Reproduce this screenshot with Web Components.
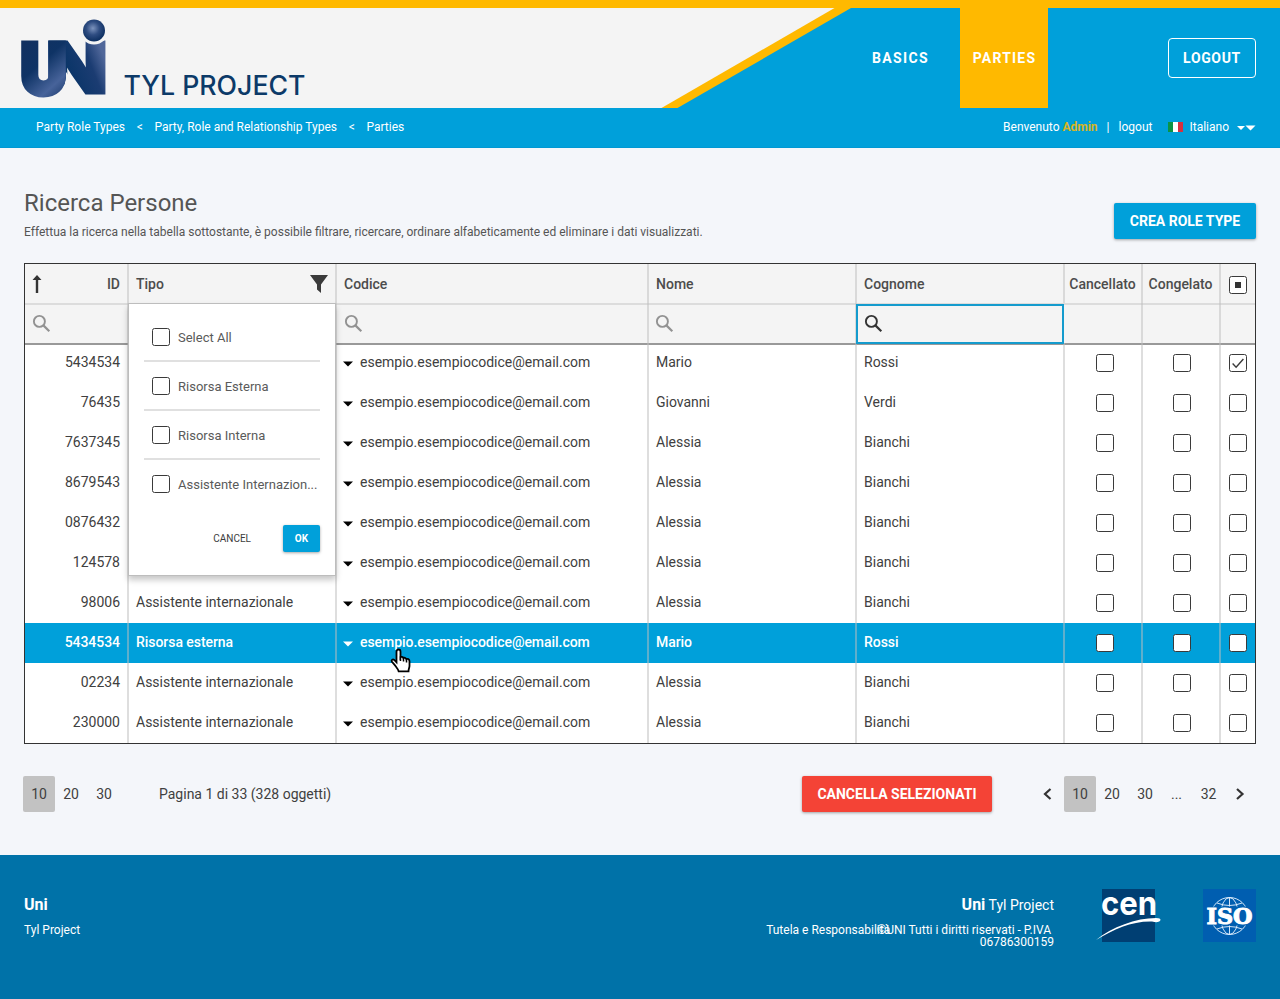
<!DOCTYPE html>
<html lang="it">
<head>
<meta charset="utf-8">
<title>Uni Tyl Project</title>
<style>
html,body{margin:0;padding:0}
body{background:#f4f6fa;font-family:Roboto,"Liberation Sans",sans-serif;font-size:14px;color:#404040;width:1280px;height:999px;overflow:hidden}
</style>
</head>
<body>
<uni-app></uni-app>
<script>
function define(name, css, html, setup) {
  const tpl = document.createElement('template');
  tpl.innerHTML = '<style>*{box-sizing:border-box}:host{display:block;box-sizing:border-box}' + css + '</style>' + html;
  customElements.define(name, class extends HTMLElement {
    constructor() {
      super();
      this.attachShadow({ mode: 'open' });
    }
    connectedCallback() {
      if (this.shadowRoot.childNodes.length) return;
      this.shadowRoot.append(tpl.content.cloneNode(true));
      if (setup) setup(this, this.shadowRoot);
    }
  });
}

define('uni-checkbox', `
  :host{width:18px;height:18px;flex:none;border:1.5px solid #3a3a3a;border-radius:2.5px;background:#fff;display:flex;align-items:center;justify-content:center}
  svg{display:none;flex:none}
  i{display:none;width:6px;height:6px;background:#333}
  :host([checked]) svg{display:block}
  :host([mixed]) i{display:block}`,
  `<i></i><svg width="14" height="14" viewBox="0 0 14 14"><path d="M1.6 7.6l3.5 3.6L12.4 3" fill="none" stroke="#3a3a3a" stroke-width="1.4"/></svg>`);

define('uni-button', `
  :host{display:flex;align-items:center;justify-content:center;height:36px;border-radius:2px;background:#00a0da;color:#fff;font-weight:700;font-size:14px;box-shadow:0 1px 3px rgba(0,0,0,.35);white-space:nowrap}
  :host([danger]){background:#f44336}
  :host([small]){width:37px;height:27px;font-size:10px}`,
  `<slot></slot>`);

define('uni-search', `
  :host{width:20px;height:20px;color:#929292}
  :host([active]){color:#333}
  svg{display:block}`,
  `<svg width="20" height="20" viewBox="0 0 20 20" fill="none" stroke="currentColor"><circle cx="7.4" cy="7.4" r="5.5" stroke-width="1.9"/><path d="M11.4 11.400l5.900 5.900" stroke-width="2.200"/></svg>`);

define('uni-logo', `
  :host{width:320px;height:100px}
  svg{display:block}
  text{font-family:Inter,Roboto,sans-serif;font-weight:900}
  .name{font-weight:500}`,
  `<svg width="320" height="100" viewBox="0 8 320 100">
    <defs>
      <linearGradient id="a" gradientUnits="userSpaceOnUse" x1="20" y1="40" x2="72" y2="98">
        <stop offset="0" stop-color="#12305f"/><stop offset=".4" stop-color="#0e3365"/><stop offset=".72" stop-color="#47639a"/><stop offset="1" stop-color="#0f2f60"/>
      </linearGradient>
      <linearGradient id="b" gradientUnits="userSpaceOnUse" x1="50" y1="84" x2="106" y2="62">
        <stop offset="0" stop-color="#4d679b"/><stop offset=".35" stop-color="#0a3568"/><stop offset=".75" stop-color="#1b3c72"/><stop offset="1" stop-color="#50679a"/>
      </linearGradient>
      <radialGradient id="c" cx=".45" cy=".4" r=".6">
        <stop offset="0" stop-color="#7c93bd"/><stop offset=".5" stop-color="#2f4d82"/><stop offset="1" stop-color="#0c2e60"/>
      </radialGradient>
      <clipPath id="k"><path d="M48 38H106V96H84L66 72Q67 86 58 91L48 78Z"/></clipPath>
    </defs>
    <g clip-path="url(#k)"><text x="45.500" y="92.500" font-size="70" textLength="62" lengthAdjust="spacingAndGlyphs" fill="url(#b)" stroke="url(#b)" stroke-width="3">N</text></g>
    <text x="20.500" y="94.300" font-size="70.500" textLength="46" lengthAdjust="spacingAndGlyphs" fill="url(#a)" stroke="url(#a)" stroke-width="5">U</text>
    <circle cx="94" cy="30" r="14.500" fill="#f4f4f4"/>
    <circle cx="94" cy="30.500" r="11" fill="url(#c)"/>
    <text class="name" x="123.500" y="95" font-size="27" textLength="182" lengthAdjust="spacingAndGlyphs" fill="#0c3a68">TYL PROJECT</text>
  </svg>`);

define('uni-header', `
  .top{height:108px;border-top:8px solid #ffb900;display:flex;justify-content:space-between;background:#00a0da;position:relative}
  .wedge{position:absolute;left:0;top:0}
  uni-logo{position:relative}
  nav{position:relative;display:flex;align-items:center;margin-right:24px;color:#fff;font-weight:700;letter-spacing:1.35px;line-height:100px}
  nav span{width:88px;text-align:center;padding-left:1px}
  nav .on{background:#ffb900;letter-spacing:1.2px}
  nav a{margin:0 0 0 120px;width:88px;height:40px;line-height:38px;text-align:center;border:1px solid #fff;border-radius:4px;letter-spacing:.65px}
  nav .first{margin-right:16px}
  .bar{height:40px;background:#00a0da;border-bottom:1px solid #0098d3;display:flex;align-items:center;justify-content:space-between;padding:0 24px 2px 36px;font-size:12px;color:#fff}
  .bar div{display:flex;align-items:center;white-space:pre}
  b{color:#ffb900;opacity:.85}
  .g{margin:0 11.7px}`,
  `<div class="top">
    <svg class="wedge" width="860" height="100"><path d="M0 0H851L677.5 100H0Z" fill="#ffb900"/><path d="M0 0H834.5L661.5 100H0Z" fill="#f4f4f4"/></svg>
    <uni-logo></uni-logo>
    <nav><span class="first">BASICS</span><span class="on">PARTIES</span><a>LOGOUT</a></nav>
  </div>
  <div class="bar">
    <div><span>Party Role Types</span><span class="g">&lt;</span><span>Party, Role and Relationship Types</span><span class="g">&lt;</span><span>Parties</span></div>
    <div><span>Benvenuto <b>Admin</b></span><span style="margin:0 9px">|</span><span>logout</span>
      <svg width="15" height="10" style="margin:1px 6px 0 16px"><path d="M0 0h5v10H0z" fill="#0b9444"/><path d="M5 0h5v10H5z" fill="#fff"/><path d="M10 0h5v10h-5z" fill="#d5313f"/></svg><span>Italiano</span>
      <svg width="20" height="6" style="margin:2px 0 0 7px" fill="#fff"><path d="M1 1h8l-4 4zM9.500 .5h10l-5 5z"/></svg></div>
  </div>`);

define('uni-filter-menu', `
  :host{position:absolute;left:-1px;top:39px;width:208px;height:273px;background:#fff;border:1px solid #bdbdbd;box-shadow:0 4px 6px rgba(0,0,0,.22);padding:9px 15px 0;font-size:13px;font-weight:400;color:#5a5a5a;z-index:2}
  .o{display:flex;align-items:center;height:49px;padding:0 0 0 8px;gap:8px;border-bottom:2px solid #e0e0e0;white-space:nowrap}
  .o.last{border-color:transparent}
  .o span{padding-top:1px}
  .f{display:flex;justify-content:flex-end;align-items:center;gap:32px;margin-top:16px;font-size:10px;color:#3c3c3c}`,
  `<div class="o"><uni-checkbox></uni-checkbox><span>Select All</span></div>
   <div class="o"><uni-checkbox></uni-checkbox><span>Risorsa Esterna</span></div>
   <div class="o"><uni-checkbox></uni-checkbox><span>Risorsa Interna</span></div>
   <div class="o last"><uni-checkbox></uni-checkbox><span>Assistente Internazion...</span></div>
   <div class="f"><span>CANCEL</span><uni-button small>OK</uni-button></div>`);

const COLS = 'display:grid;grid-template-columns:104px 208px 312px 208px 208px 78px 78px 34px;';
const CELL = 'display:flex;align-items:center;border-right:2px solid rgba(190,190,190,.5);padding:0 7px 0 7px;white-space:nowrap;min-width:0;';

define('uni-row', `
  :host{${COLS}height:40px;background:#fff}
  :host([first]){box-shadow:inset 0 2px #999}
  :host([selected]){background:#00a0da;color:#fff;font-weight:500;letter-spacing:-.05px}
  div{${CELL}}
  div:last-child{border:0}
  #id{justify-content:flex-end}
  .t{padding-bottom:2px}
  .c{justify-content:center;padding:0}
  .c6{padding-left:4px}.c7{padding-left:2px}
  svg{margin:3px 7px 0 -1px;color:#000}
  :host([selected]) svg{color:#fff}`,
  `<div class="t" id="id"></div><div class="t" id="tipo"></div>
   <div class="t"><svg width="10" height="6"><path d="M0 .5h10L5 5.500z" fill="currentColor"/></svg><span>esempio.esempiocodice@email.com</span></div>
   <div class="t" id="nome"></div><div class="t" id="cognome"></div>
   <div class="c c6"><uni-checkbox></uni-checkbox></div><div class="c c7"><uni-checkbox></uni-checkbox></div><div class="c"><uni-checkbox id="sel"></uni-checkbox></div>`,
  (el, r) => {
    for (const k of ['id', 'tipo', 'nome', 'cognome']) r.getElementById(k).textContent = el.dataset[k] || '';
    if (el.hasAttribute('checked')) r.getElementById('sel').setAttribute('checked', '');
  });

define('uni-table', `
  :host{position:relative;height:481px;border:1px solid #333;background:#fff}
  .h,.s{${COLS}background:#f4f4f4}
  .h{height:39px;font-weight:500;color:#4c4c4c}
  .s{height:40px;box-shadow:inset 0 2px #dcdcdc}
  .h>div,.s>div{${CELL}}
  .h>div:last-child,.s>div:last-child{border-right:0}
  .h>div{position:relative;padding-top:1px}
  .h .sp{justify-content:space-between}
  .h .c{justify-content:center;padding-left:0;padding-right:1px}
  .h .c.l{padding-top:3px;padding-right:0}
  .s>div{padding-top:2px}
  .s .on{border:2px solid #149bcd;margin:1px 0 -1px -1px;width:208px;padding:0 6px;position:relative}
  .cursor{position:absolute;left:365px;top:384px;z-index:3}`,
  `<div class="h">
    <div class="sp"><svg width="10" height="18" viewBox="0 0 10 18"><path d="M5 0L9.500 5H6.200V18H3.800V5H.5z" fill="#333"/></svg><span>ID</span></div>
    <div class="sp"><span>Tipo</span><svg width="18" height="18" viewBox="0 0 18 18"><path d="M0 0H18L11 9.500V18L7 14.500V9.500z" fill="#3a3a3a"/></svg><uni-filter-menu></uni-filter-menu></div>
    <div>Codice</div><div>Nome</div><div>Cognome</div><div class="c">Cancellato</div><div class="c">Congelato</div><div class="c l"><uni-checkbox mixed></uni-checkbox></div>
  </div>
  <div class="s"><div><uni-search></uni-search></div><div></div><div><uni-search></uni-search></div><div><uni-search style="margin-left:-1px"></uni-search></div><div class="on"><uni-search active></uni-search></div><div></div><div></div><div></div></div>
  <section></section>
  <svg class="cursor" width="22" height="26" viewBox="0 0 22 25" preserveAspectRatio="none"><path d="M8.500 1.500c1.500 0 2 .8 2 2v5.500c.5-.8 2.500-.6 2.900.7.8-.7 2.400-.3 2.900 1 1.300-.6 3.200.1 3.200 2v4.300c0 2-1 3-1 5.500H8.700c-.5-2-2.300-4-3.700-5.800L1.800 13c-.7-1.500 1-2.700 2.400-1.500l2.300 2.300V3.500c0-1.200.6-2 2-2z" fill="#fff" stroke="#000" stroke-width="1.800"/><path d="M10.500 8v4.500M13.500 9.500v3.500M16.500 11v3" stroke="#000" stroke-width="1.500"/></svg>`,
  (el, r) => {
    const AI = 'Assistente internazionale';
    const rows = [['5434534','','Mario','Rossi','first checked'],['76435','','Giovanni','Verdi'],['7637345','','Alessia','Bianchi'],['8679543','','Alessia','Bianchi'],['0876432','','Alessia','Bianchi'],['124578','','Alessia','Bianchi'],['98006',AI,'Alessia','Bianchi'],['5434534','Risorsa esterna','Mario','Rossi','selected'],['02234',AI,'Alessia','Bianchi'],['230000',AI,'Alessia','Bianchi']];
    r.querySelector('section').innerHTML = rows.map(([id, tipo, nome, cognome, flags = '']) =>
      `<uni-row data-id="${id}" data-tipo="${tipo}" data-nome="${nome}" data-cognome="${cognome}" ${flags}></uni-row>`).join('');
  });

define('uni-pager', `
  :host{display:flex;align-items:center;height:36px}
  ::slotted(*){box-sizing:border-box;width:33px;text-align:center;line-height:36px}
  ::slotted(.on){width:32px;background:#c2c2c2;border-radius:2px}`,
  `<slot></slot>`);

define('uni-footer', `
  :host{height:144px;background:#0072a8;color:#fff;display:flex;padding:34px 24px 0;font-size:12px}
  b{font-size:16px;font-weight:700}
  .l{flex:1;padding-top:6px}
  .l b,.l span{display:block}
  .l b{line-height:20px}
  .l span{line-height:14px;margin-top:8px}
  .r{width:300px;text-align:right;padding-top:6px}
  .r p{margin:0;line-height:20px;font-size:14px}
  .n{display:flex;justify-content:flex-end;margin-top:9px;line-height:12px;white-space:nowrap}
  .n .x{margin-right:-13.5px}
  .n .y span{display:block}
  .n .y span:first-child{padding-right:3px}
  .cen{margin:0 0 0 42px}
  .iso{margin-left:41px}
  svg{flex:none;overflow:visible}`,
  `<div class="l"><b>Uni</b><span>Tyl Project</span></div>
   <div class="r"><p><b>Uni</b> Tyl Project</p><div class="n"><span class="x">Tutela e Responsabilità</span><div class="y"><span>©UNI Tutti i diritti riservati - P.IVA</span><span>06786300159</span></div></div></div>
   <svg class="cen" width="66" height="53" viewBox="0 0 66 53"><rect x="6" width="53" height="53" fill="#003f73"/>
     <text x="5" y="25.500" font-family="Inter,sans-serif" font-weight="700" font-size="33" textLength="56" lengthAdjust="spacingAndGlyphs" fill="#fff">cen</text>
     <path d="M0 51C16 38 40 29 60 29Q66 29 64 32Q62 34 56 32.500C36 32 18 40 0 51z" fill="#fff"/></svg>
   <svg class="iso" width="53" height="53" viewBox="0 0 53 53"><rect width="53" height="53" fill="#005eb0"/>
     <g fill="none" stroke="#e8f3ff" stroke-width=".9"><circle cx="26.500" cy="27" r="18.500"/><ellipse cx="26.500" cy="27" rx="9" ry="18.500"/><path d="M26.500 8.500v37M14 14q12.500 5 25 0M14 40q12.500-5 25 0"/></g>
     <rect x="4" y="17.500" width="45" height="19" fill="#005eb0"/>
     <text x="3.500" y="35" font-family="'DejaVu Serif',serif" font-weight="700" font-size="21.500" textLength="46" lengthAdjust="spacingAndGlyphs" fill="#fff" stroke="#fff" stroke-width="1">ISO</text></svg>`);

define('uni-app', `
  :host{height:999px;display:flex;flex-direction:column}
  main{flex:1;padding:0 24px}
  .head{display:flex;justify-content:space-between;height:115px}
  h1{font-weight:400;font-size:24px;line-height:28px;color:#555;margin:41px 0 0}
  .head p{margin:8px 0 0;font-size:12px;line-height:14px;color:#555}
  .head uni-button{width:142px;margin-top:55px}
  .foot{display:flex;align-items:center;margin:32px 0 0 -1px;height:36px}
  .info{margin-left:38px;flex:1}
  .foot uni-button{width:190px;margin-right:47px}
  svg{display:block;flex:none}`,
  `<uni-header></uni-header>
   <main>
     <div class="head"><div><h1>Ricerca Persone</h1><p>Effettua la ricerca nella tabella sottostante, è possibile filtrare, ricercare, ordinare alfabeticamente ed eliminare i dati visualizzati.</p></div><uni-button>CREA ROLE TYPE</uni-button></div>
     <uni-table></uni-table>
     <div class="foot">
       <uni-pager><span class="on">10</span><span style="width:32px">20</span><span style="width:34px">30</span></uni-pager>
       <span class="info">Pagina 1 di 33 (328 oggetti)</span>
       <uni-button danger>CANCELLA SELEZIONATI</uni-button>
       <svg width="17" height="14"><path d="M11.500 2L6 7l5.500 5" fill="none" stroke="#333" stroke-width="2.200"/></svg>
       <uni-pager style="margin:0 10px 0 8px"><span class="on">10</span><span style="width:32px">20</span><span style="width:34px">30</span><span style="width:29px">...</span><span style="width:35px">32</span></uni-pager>
       <svg width="20" height="14"><path d="M1 2l5.500 5L1 12" fill="none" stroke="#333" stroke-width="2.200"/></svg>
     </div>
   </main>
   <uni-footer></uni-footer>`);
</script>
</body>
</html>
